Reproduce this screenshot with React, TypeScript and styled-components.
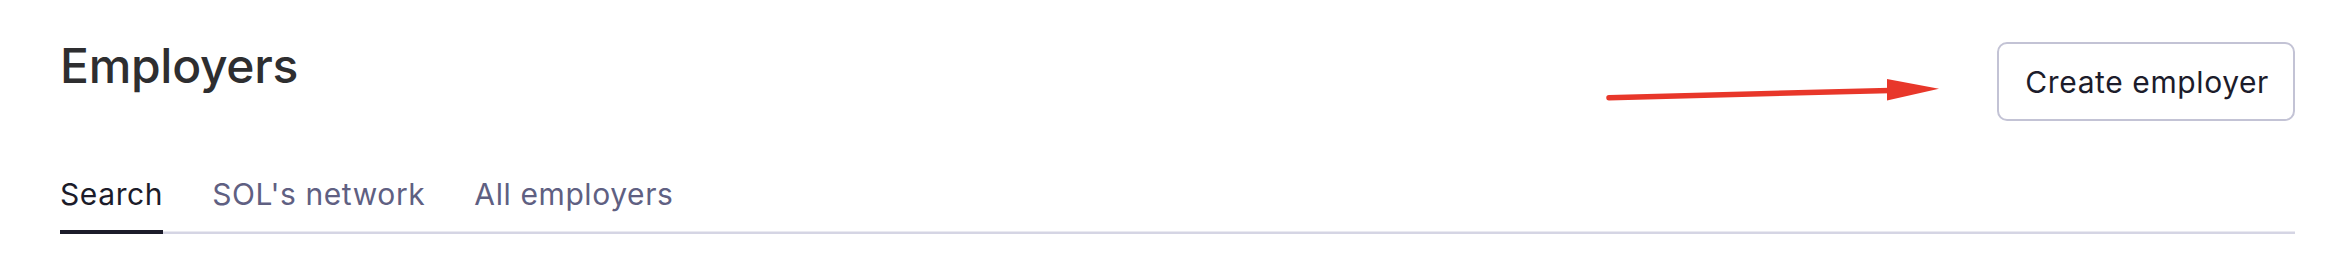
import styled, { createGlobalStyle } from 'styled-components';

const GlobalStyle = createGlobalStyle`
  html, body {
    margin: 0;
    padding: 0;
    background: #ffffff;
  }
  body {
    font-family: Inter, "Noto Sans", "Liberation Sans", sans-serif;
    -webkit-font-smoothing: antialiased;
  }
`;

const tabs = ['Search', "SOL's network", 'All employers'];

export default function App() {
  return (
    <>
      <GlobalStyle />
      <Page>
        <Header>
          <Title>Employers</Title>
          <CreateButton type="button">Create employer</CreateButton>
        </Header>
        <TabList>
          {tabs.map((tab, index) => (
            <Tab key={tab} $active={index === 0}>
              {tab}
            </Tab>
          ))}
        </TabList>
        <Annotation viewBox="0 0 2348 274" aria-hidden="true">
          <line
            x1="1609"
            y1="97.7"
            x2="1890"
            y2="90.4"
            stroke="#e8372a"
            strokeWidth="5.5"
            strokeLinecap="round"
          />
          <polygon points="1887,79 1939,88.7 1887,100.5" fill="#e8372a" />
        </Annotation>
      </Page>
    </>
  );
}

const Page = styled.div`
  position: relative;
  box-sizing: border-box;
  width: 2348px;
  height: 274px;
  padding: 37px 53px 0 60px;
`;

const Header = styled.div`
  display: flex;
  justify-content: space-between;
  align-items: flex-start;
`;

const Title = styled.h1`
  margin: 0;
  font-size: 48px;
  line-height: 58px;
  font-weight: 500;
  color: #2e2e30;
  letter-spacing: -0.3px;
`;

const CreateButton = styled.button`
  margin-top: 5px;
  box-sizing: border-box;
  height: 79px;
  padding: 0 24px 0 26px;
  border: 2px solid #c3c3d5;
  border-radius: 10px;
  background: #ffffff;
  font-family: inherit;
  font-size: 30px;
  line-height: 36px;
  font-weight: 400;
  letter-spacing: 0.6px;
  color: #1c1c2b;
  cursor: pointer;
`;

const TabList = styled.div`
  display: flex;
  gap: 49px;
  margin-top: 55px;
  box-shadow: inset 0 -2.5px 0 #d5d5e4;
`;

const Tab = styled.div<{ $active?: boolean }>`
  padding-bottom: 18px;
  border-bottom: 4px solid ${(p) => (p.$active ? '#1c1c2a' : 'transparent')};
  font-size: 30px;
  line-height: 36px;
  letter-spacing: 0.6px;
  color: ${(p) => (p.$active ? '#1c1c2a' : '#5f6082')};
  cursor: pointer;
`;

const Annotation = styled.svg`
  position: absolute;
  left: 0;
  top: 0;
  width: 2348px;
  height: 274px;
  pointer-events: none;
`;
